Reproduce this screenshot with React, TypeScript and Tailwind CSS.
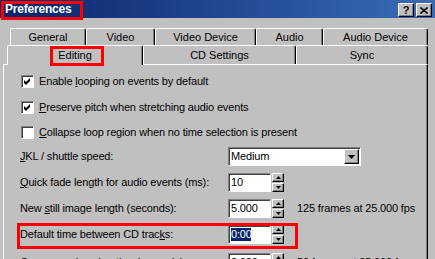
import React from "react";

const raised =
  "border border-t-white border-l-white border-r-black border-b-black shadow-[inset_-1px_-1px_#808080] bg-[#c0c0c0]";
const sunken =
  "border border-t-[#808080] border-l-[#808080] border-r-white border-b-white shadow-[inset_1px_1px_#404040] bg-white";

function Tab({ label, className }: { label: string; className: string }) {
  return (
    <div
      className={`flex items-center justify-center border-t border-l border-r border-t-white border-l-white border-r-black rounded-tl-[2px] rounded-tr-[3px] shadow-[inset_-1px_0_#808080] bg-[#c0c0c0] ${className}`}
    >
      {label}
    </div>
  );
}

function CheckBox({ checked }: { checked: boolean }) {
  return (
    <div className={`w-[13px] h-[13px] shrink-0 flex items-center justify-center ${sunken}`}>
      {checked && (
        <svg width="7" height="7" viewBox="0 0 7 7">
          <path d="M0 2 L2 4 L6 0 L6 3 L2 7 L0 5 Z" fill="#000" />
        </svg>
      )}
    </div>
  );
}

function CheckRow({ checked, children }: { checked: boolean; children: React.ReactNode }) {
  return (
    <div className="flex items-center h-[13px] ml-[1px] gap-[5px]">
      <CheckBox checked={checked} />
      <span className="whitespace-nowrap">{children}</span>
    </div>
  );
}

function Arrow({ up }: { up?: boolean }) {
  return (
    <svg width="5" height="3" viewBox="0 0 5 3">
      <path d={up ? "M0 3 L2.5 0 L5 3 Z" : "M0 0 L5 0 L2.5 3 Z"} fill="#000" />
    </svg>
  );
}

function Spin({ value }: { value: React.ReactNode }) {
  return (
    <div className="flex items-start gap-[1px]">
      <div className={`w-[43px] h-[19px] flex items-center pl-[2px] overflow-hidden ${sunken}`}>{value}</div>
      <div className="flex flex-col gap-[1px]">
        <div className={`w-[12px] h-[9px] flex items-center justify-center ${raised}`}>
          <Arrow up />
        </div>
        <div className={`w-[12px] h-[9px] flex items-center justify-center ${raised}`}>
          <Arrow />
        </div>
      </div>
    </div>
  );
}

export default function App() {
  return (
    <div className="relative w-[435px] h-[259px] overflow-hidden bg-[#c0c0c0] text-black text-[11px] leading-none font-['Liberation_Sans',Arial,sans-serif]">
      {/* Title bar */}
      <div className="h-[18px] flex items-center justify-between bg-gradient-to-r from-[#0a246a] to-[#3a6cb6] pl-[5px] pr-[3px]">
        <span className="text-white font-bold text-[12px] tracking-[-0.2px]">Preferences</span>
        <div className="flex gap-[2px] pt-[2px]">
          <div className={`w-[16px] h-[14px] flex items-center justify-center font-bold text-[11px] ${raised}`}>?</div>
          <div className={`w-[16px] h-[14px] flex items-center justify-center ${raised}`}>
            <svg width="8" height="7" viewBox="0 0 8 7">
              <path d="M0.5 0.5 L7.5 6.5 M7.5 0.5 L0.5 6.5" stroke="#000" strokeWidth="1.6" />
            </svg>
          </div>
        </div>
      </div>

      {/* Tabs */}
      <div className="mt-[10px]">
        <div className="flex h-[17px] pl-[10px]">
          <Tab label="General" className="w-[76px]" />
          <Tab label="Video" className="w-[69px]" />
          <Tab label="Video Device" className="w-[101px]" />
          <Tab label="Audio" className="w-[67px]" />
          <Tab label="Audio Device" className="w-[105px]" />
        </div>
        <div className="flex h-[19px] pl-[7px] items-start">
          <Tab label="Editing" className="w-[136px] h-[20px] relative z-10 pb-[1px]" />
          <Tab label="CD Settings" className="w-[153px] h-[19px]" />
          <Tab label="Sync" className="w-[132px] h-[19px]" />
        </div>

        {/* Panel */}
        <div className="ml-[3px] w-[425px] h-[200px] border-t border-l border-r border-t-white border-l-white border-r-black shadow-[inset_-1px_0_#808080] pl-[16px] pt-[10px] flex flex-col tracking-[-0.15px]">
          <CheckRow checked>
            Enable <span className="underline">l</span>ooping on events by default
          </CheckRow>
          <div className="mt-[13px]">
            <CheckRow checked>
              <span className="underline">P</span>reserve pitch when stretching audio events
            </CheckRow>
          </div>
          <div className="mt-[12px]">
            <CheckRow checked={false}>
              <span className="underline">C</span>ollapse loop region when no time selection is present
            </CheckRow>
          </div>

          <div className="mt-[8px] flex items-center h-[19px]">
            <span className="w-[208px] whitespace-nowrap">
              <span className="underline">J</span>KL / shuttle speed:
            </span>
            <div className={`w-[133px] h-[19px] flex items-center justify-between pl-[2px] pr-[1px] ${sunken}`}>
              <span>Medium</span>
              <div className={`w-[15px] h-[15px] flex items-center justify-center ${raised}`}>
                <svg width="7" height="4" viewBox="0 0 7 4">
                  <path d="M0 0 L7 0 L3.5 4 Z" fill="#000" />
                </svg>
              </div>
            </div>
          </div>

          <div className="mt-[7px] flex items-center h-[19px]">
            <span className="w-[208px] whitespace-nowrap">
              <span className="underline">Q</span>uick fade length for audio events (ms):
            </span>
            <Spin value="10" />
          </div>

          <div className="mt-[7px] flex items-center h-[19px]">
            <span className="w-[208px] whitespace-nowrap">
              New <span className="underline">s</span>till image length (seconds):
            </span>
            <Spin value="5.000" />
            <span className="ml-[13px] whitespace-nowrap">125 frames at 25.000 fps</span>
          </div>

          <div className="mt-[7px] flex items-center h-[19px]">
            <span className="w-[208px] whitespace-nowrap">
              Default time between CD trac<span className="underline">k</span>s:
            </span>
            <Spin
              value={
                <span className="inline-block w-[20px] overflow-hidden whitespace-nowrap bg-[#0a246a] text-white leading-[13px]">
                  0:00
                </span>
              }
            />
          </div>

          <div className="mt-[9px] flex items-center h-[19px]">
            <span className="w-[208px] whitespace-nowrap">
              Cu<span className="underline">r</span>sor preview duration (seconds):
            </span>
            <Spin value="2.000" />
            <span className="ml-[13px] whitespace-nowrap">50 frames at 25.000 fps</span>
          </div>
        </div>
      </div>

      {/* Red annotation boxes */}
      <div className="absolute left-[1px] top-[1px] w-[82px] h-[19px] border-[3px] border-[#f00]" />
      <div className="absolute left-[50px] top-[46px] w-[54px] h-[20px] border-[3px] border-[#f00] z-20" />
      <div className="absolute left-[17px] top-[223px] w-[281px] h-[26px] border-[3px] border-[#f00]" />
    </div>
  );
}
